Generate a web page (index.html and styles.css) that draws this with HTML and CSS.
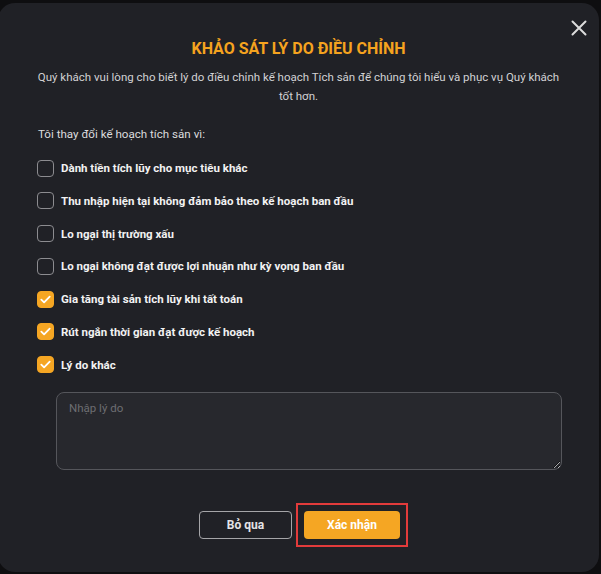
FILE: index.html
```html
<!DOCTYPE html>
<html lang="vi">
<head>
<meta charset="utf-8">
<title>Khảo sát lý do điều chỉnh</title>
<link rel="stylesheet" href="styles.css">
</head>
<body>
<div class="modal">
  <button class="close" aria-label="Đóng">
    <svg width="16" height="16" viewBox="0 0 16 16"><path d="M1.5 1.5 L14.5 14.5 M14.5 1.5 L1.5 14.5" stroke="#dcdcdc" stroke-width="2" stroke-linecap="round"/></svg>
  </button>
  <h1 class="title">KHẢO SÁT LÝ DO ĐIỀU CHỈNH</h1>
  <p class="subtitle">Quý khách vui lòng cho biết lý do điều chỉnh kế hoạch Tích sản để chúng tôi hiểu và phục vụ Quý khách tốt hơn.</p>
  <p class="question">Tôi thay đổi kế hoạch tích sản vì:</p>
  <ul class="options">
    <li class="option"><span class="box"></span><span class="label">Dành tiền tích lũy cho mục tiêu khác</span></li>
    <li class="option"><span class="box"></span><span class="label">Thu nhập hiện tại không đảm bảo theo kế hoạch ban đầu</span></li>
    <li class="option"><span class="box"></span><span class="label">Lo ngại thị trường xấu</span></li>
    <li class="option"><span class="box"></span><span class="label">Lo ngại không đạt được lợi nhuận như kỳ vọng ban đầu</span></li>
    <li class="option checked"><span class="box"><svg width="11" height="9" viewBox="0 0 11 9"><path d="M1.3 4.6 L4.1 7.3 L9.7 1.6" fill="none" stroke="#fff" stroke-width="1.8" stroke-linecap="round" stroke-linejoin="round"/></svg></span><span class="label">Gia tăng tài sản tích lũy khi tất toán</span></li>
    <li class="option checked"><span class="box"><svg width="11" height="9" viewBox="0 0 11 9"><path d="M1.3 4.6 L4.1 7.3 L9.7 1.6" fill="none" stroke="#fff" stroke-width="1.8" stroke-linecap="round" stroke-linejoin="round"/></svg></span><span class="label">Rút ngắn thời gian đạt được kế hoạch</span></li>
    <li class="option checked"><span class="box"><svg width="11" height="9" viewBox="0 0 11 9"><path d="M1.3 4.6 L4.1 7.3 L9.7 1.6" fill="none" stroke="#fff" stroke-width="1.8" stroke-linecap="round" stroke-linejoin="round"/></svg></span><span class="label">Lý do khác</span></li>
  </ul>
  <textarea class="reason" placeholder="Nhập lý do"></textarea>
  <div class="actions">
    <button class="btn btn-ghost">Bỏ qua</button>
    <span class="highlight"><button class="btn btn-primary">Xác nhận</button></span>
  </div>
</div>
</body>
</html>
```
FILE: styles.css
```css
* { box-sizing: border-box; }
html, body {
  margin: 0;
  height: 100%;
  background: #0e0e10;
  overflow: hidden;
}
body {
  font-family: Roboto, "Liberation Sans", Arial, sans-serif;
  padding-top: 3px;
}
.modal {
  position: relative;
  margin-left: -2px;
  width: 601px;
  height: 569px;
  background: #202126;
  border-radius: 17px;
  padding: 36px 40px 0 40px;
  display: flex;
  flex-direction: column;
}
.close {
  position: absolute;
  top: 16px;
  right: 11px;
  width: 18px;
  height: 18px;
  padding: 0;
  border: 0;
  background: none;
  display: flex;
  align-items: center;
  justify-content: center;
}
.title {
  margin: 0;
  text-align: center;
  color: #f5a31f;
  font-size: 16px;
  line-height: 20px;
  font-weight: 700;
}
.subtitle {
  margin: 9px -8px 0 -8px;
  text-align: center;
  color: #d2d2d4;
  font-size: 11.5px;
  line-height: 19px;
}
.question {
  margin: 19px 0 0 0;
  color: #dcdcde;
  font-size: 11.6px;
  line-height: 19px;
}
.options {
  list-style: none;
  margin: 15px 0 0 0;
  padding: 0;
  display: flex;
  flex-direction: column;
  gap: 14.8px;
}
.option {
  display: flex;
  align-items: center;
  gap: 7px;
  height: 18px;
  margin-left: -1px;
}
.box {
  width: 17px;
  height: 17px;
  border: 1.5px solid #8c8c90;
  border-radius: 4px;
  display: flex;
  align-items: center;
  justify-content: center;
  flex: none;
}
.checked .box {
  background: #f5a623;
  border-color: #f5a623;
}
.label {
  color: #f2f2f2;
  font-size: 11.5px;
  font-weight: 700;
}
.reason {
  margin: 18px 0 0 18px;
  width: 506px;
  height: 78px;
  background: #27282d;
  border: 1px solid #55565b;
  border-radius: 8px;
  padding: 8px 12px;
  color: #ddd;
  font-family: inherit;
  font-size: 11.5px;
  resize: vertical;
  outline: none;
}
.reason::placeholder { color: #6d6e72; }
.actions {
  margin-top: 33px;
  padding-left: 10px;
  display: flex;
  justify-content: center;
  align-items: center;
  gap: 4px;
}
.btn {
  height: 28px;
  border-radius: 4px;
  font-family: inherit;
  font-size: 12px;
  font-weight: 700;
  padding: 0;
}
.btn-ghost {
  width: 93px;
  background: transparent;
  border: 1px solid #a5a5a8;
  color: #e4e4e6;
}
.highlight {
  display: flex;
  padding: 6px 6px;
  border: 2px solid #e23b3b;
}
.btn-primary {
  width: 96px;
  background: #f5a623;
  border: 0;
  color: #fff;
}
```
